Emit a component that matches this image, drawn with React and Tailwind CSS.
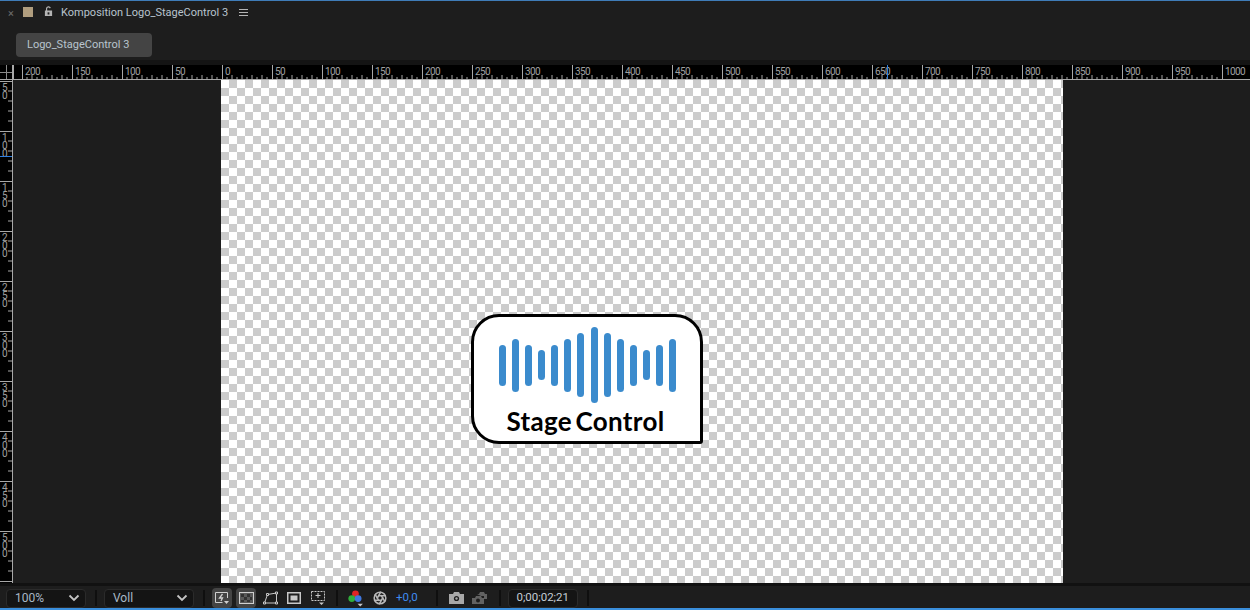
import { Aperture } from "lucide-react"

const font = { fontFamily: 'Roboto, sans-serif' }

const topMarks = [200, 150, 100, 50]
for (let v = 0; v <= 950; v += 50) topMarks.push(v)

const sideMarks = []
for (let v = 50; v <= 500; v += 50) sideMarks.push(v)

function TopSegment({ label }) {
    return (
        <div className="relative h-[14px] w-[50px] shrink-0 border-l border-[#a8a8a8]">
            <span className="block pl-[2px] pt-[1px] text-[10px] leading-[11px] tracking-[-0.6px] text-[#a0a0a0]">{label}</span>
            <svg className="absolute bottom-0 left-0" width="50" height="5">
                {[9, 19, 29, 39].map((x) => <line key={x} x1={x} x2={x} y1="1" y2="5" stroke="#a8a8a8" />)}
                {[4, 14, 24, 34, 44].map((x) => <line key={x} x1={x} x2={x} y1="3" y2="5" stroke="#a8a8a8" />)}
            </svg>
        </div>
    )
}

function SideSegment({ label }) {
    return (
        <div className="relative h-[50px] w-[12px] shrink-0 border-t border-[#a8a8a8]">
            <div className="ml-[2px] w-[6px] break-all pt-[2px] text-[10px] leading-[8px] text-[#a0a0a0]">{label}</div>
            <svg className="absolute right-0 top-0" width="4" height="50">
                {[9, 19, 29, 39].map((y) => <line key={y} x1="0" x2="4" y1={y} y2={y} stroke="#a8a8a8" />)}
            </svg>
        </div>
    )
}

function Logo() {
    const heights = [41, 53, 41, 30, 41, 53, 64, 76, 64, 53, 41, 30, 41, 53]
    return (
        <div className="flex h-[130px] w-[232px] flex-col items-center rounded-[28px] rounded-br-[3px] border-[3px] border-black bg-white pl-[1px]">
            <div className="mt-[8px] flex h-[80px] items-center gap-[6.14px]">
                {heights.map((h, i) => <div key={i} className="w-[7px] rounded-full bg-[#3b8bcd]" style={{ height: h }} />)}
            </div>
            <div className="mt-[2px] mr-[4px] text-[26px] leading-[28px] font-bold tracking-[0.3px] text-black [word-spacing:-3px]" style={{ fontFamily: "Lato, sans-serif" }}>Stage Control</div>
        </div>
    )
}

function Dropdown({ label, className }) {
    return (
        <div className={`flex h-[19px] items-center justify-between rounded-[4px] border border-[#2b2b2b] bg-[#141414] pl-[8px] pr-[5px] text-[12px] text-[#a9b8c6] ${className}`}>
            <span>{label}</span>
            <svg width="12" height="8" viewBox="0 0 12 8" fill="none" stroke="#c4c4c4" strokeWidth="1.8"><path d="M1.5 1.5 6 6l4.5-4.5" /></svg>
        </div>
    )
}

function Sep() {
    return <div className="h-[16px] w-[2px] bg-[#0f0f0f]" />
}

function ToolIcon({ active, children }) {
    return (
        <div className={`flex h-[20px] w-[20px] items-center justify-center rounded-[4px] ${active ? "bg-[#444444]" : ""}`}>
            {children}
        </div>
    )
}

export default function App() {
    return (
        <div className="flex h-[610px] w-[1250px] flex-col overflow-hidden border-t border-[#3f7cb8] bg-[#1d1d1d]" style={font}>
            <div className="flex h-[27px] items-center pb-[3px] text-[#b9c4ce]">
                <span className="ml-[8px] w-[15px] text-[11px] leading-none text-[#6e6e6e]">×</span>
                <div className="mb-[3px] h-[10px] w-[10px] bg-[#b09d7e]" />
                <svg className="ml-[11px] mb-[4px]" width="9" height="10" viewBox="0 0 10 11" fill="#b4b4b4">
                    <path d="M1 5h8v6H1zM2.2 5V2.8A2.8 2.8 0 0 1 7.6 2L6.4 2.6A1.5 1.5 0 0 0 3.5 2.9V5z" />
                    <rect x="4" y="7" width="2" height="2.4" fill="#1d1d1d" />
                </svg>
                <span className="ml-[8px] text-[11px]">Komposition Logo_StageControl 3</span>
                <svg className="ml-[11px]" width="9" height="8" stroke="#b4b4b4"><path d="M0 .5h9M0 3.5h9M0 6.5h9" /></svg>
            </div>
            <div className="h-[32px] pl-[16px] pt-[5px]">
                <div className="flex h-[24px] w-[136px] items-center rounded-[4px] bg-[#444444] pl-[11px] text-[11px] text-[#b9c4ce]">Logo_StageControl 3</div>
            </div>
            <div className="h-[5px] bg-[#141414]" />
            <div className="flex h-[15px] border-b border-[#a8a8a8] bg-black">
                <div className="h-[14px] w-[14px] shrink-0 border-r-2 border-[#a8a8a8]">
                    <svg width="12" height="14" stroke="#8a8a8a"><path d="M6.5 0v14M0 7.5h12" /></svg>
                </div>
                <div className="relative flex overflow-hidden pl-[8px]">
                    {topMarks.map((v, i) => (
                        <TopSegment key={i} label={v} />
                    ))}
                    <div className="relative h-[14px] w-[28px] shrink-0 border-l border-[#a8a8a8]">
                        <span className="block pl-[2px] pt-[1px] text-[10px] leading-[11px] tracking-[-0.6px] text-[#a0a0a0]">1000</span>
                    </div>
                    <div className="absolute top-0 left-[873px] h-[14px] w-px bg-[#2f7fe0]" />
                </div>
            </div>
            <div className="flex h-[503px]">
                <div className="relative h-full w-[13px] shrink-0 overflow-hidden border-r border-[#a8a8a8] bg-black">
                    <div className="mt-[1px]">
                        {sideMarks.map((v) => <SideSegment key={v} label={v} />)}
                        <div className="h-[2px] border-t border-[#a8a8a8]" />
                    </div>
                    <div className="absolute top-[76px] left-0 h-px w-[12px] bg-[#2f7fe0]" />
                </div>
                <div className="ml-[208px] h-full w-[842px] bg-[repeating-conic-gradient(#cccccc_0_25%,#ffffff_0_50%)] bg-[length:16px_16px] pl-[250px] pt-[234px]">
                    <Logo />
                </div>
            </div>
            <div className="h-[3px] bg-[#111111]" />
            <div className="flex h-[22px] items-center bg-[#1d1d1d] pl-[6px] pt-[2px]">
                <Dropdown label="100%" className="w-[80px]" />
                <div className="ml-[9px] mr-[7px]"><Sep /></div>
                <Dropdown label="Voll" className="w-[90px]" />
                <div className="ml-[9px] mr-[7px]"><Sep /></div>
                <div className="flex items-center gap-[4px]">
                    <ToolIcon active>
                        <svg width="16" height="14" viewBox="0 0 16 14" fill="none" stroke="#d0d0d0"><path d="M13.5 7V1.5h-12v10h7" /><path d="M8.5 3 5.5 7h3l-1.5 3" strokeWidth="1.3" /><path d="M10 10h5l-2.5 3z" fill="#d0d0d0" stroke="none" /></svg>
                    </ToolIcon>
                    <ToolIcon active>
                        <svg width="15" height="12" viewBox="0 0 15 12"><rect x=".5" y=".5" width="14" height="11" fill="#5a5a5a" stroke="#d0d0d0" /><path d="M2 2h3v3H2zM8 2h3v3H8zM5 5h3v3H5zM11 5h2v3h-2zM2 8h3v2H2zM8 8h3v2H8z" fill="#333333" /></svg>
                    </ToolIcon>
                    <ToolIcon>
                        <svg width="15" height="14" viewBox="0 0 15 14" fill="none" stroke="#c8c8c8"><path d="M1.5 12 4.5 3.5 13.5 2v10z" /><path d="M3.5 2.5h2v2h-2zM12.5 1h2v2h-2zM.5 11h2v2h-2zM12.5 11h2v2h-2z" fill="#1d1d1d" /></svg>
                    </ToolIcon>
                    <ToolIcon>
                        <svg width="14" height="12" viewBox="0 0 14 12"><rect x=".75" y=".75" width="12.5" height="10.5" fill="none" stroke="#c8c8c8" strokeWidth="1.5" /><rect x="3.5" y="3.5" width="7" height="5" fill="#c8c8c8" /></svg>
                    </ToolIcon>
                    <ToolIcon>
                        <svg width="16" height="16" viewBox="0 0 16 16" fill="none" stroke="#c8c8c8"><rect x="1.5" y="1.5" width="13" height="9" strokeDasharray="2 1" /><path d="M8 3v5M5.5 5.5h5" /><path d="M9 12.5h5l-2.5 2.5z" fill="#c8c8c8" stroke="none" /></svg>
                    </ToolIcon>
                </div>
                <div className="ml-[8px] mr-[9px]"><Sep /></div>
                <svg width="18" height="18" viewBox="0 0 16 17"><circle cx="7.5" cy="4.5" r="3.2" fill="#e02525" /><circle cx="4" cy="9" r="3.2" fill="#2fae3a" /><circle cx="10" cy="9" r="3.2" fill="#3f78e0" /><path d="M9.5 14h5L12 16.5z" fill="#c8c8c8" /></svg>
                <Aperture className="ml-[8px]" size={14} color="#b8b8b8" strokeWidth={2.6} />
                <span className="ml-[9px] text-[11.5px] text-[#3f8cf0]">+0,0</span>
                <div className="ml-[18px] mr-[11px]"><Sep /></div>
                <svg width="15" height="12" viewBox="0 0 15 12"><path d="M0 2h4l1-2h5l1 2h4v10H0z" fill="#a8a8a8" /><circle cx="7.5" cy="6.5" r="2.6" fill="#1d1d1d" /><circle cx="7.5" cy="6.5" r="1.2" fill="#a8a8a8" /></svg>
                <svg className="ml-[8px]" width="15" height="14" viewBox="0 0 15 14"><path d="M0 7h3l1-2h5l1 2h2v6H0z" fill="#626262" /><circle cx="6" cy="9.5" r="2" fill="#1d1d1d" /><path d="M5 3h2l1-2h4l1 2h2v5h-3V5H9z" fill="#626262" /></svg>
                <div className="ml-[12px] mr-[7px]"><Sep /></div>
                <div className="flex h-[19px] w-[70px] items-center justify-center rounded-[4px] border border-[#2b2b2b] bg-[#141414] text-[11.5px] text-[#c4ccd4]">0;00;02;21</div>
                <div className="ml-[9px]"><Sep /></div>
            </div>
            <div className="h-[2px] bg-[#3a8fdd]" />
        </div>
    )
}
